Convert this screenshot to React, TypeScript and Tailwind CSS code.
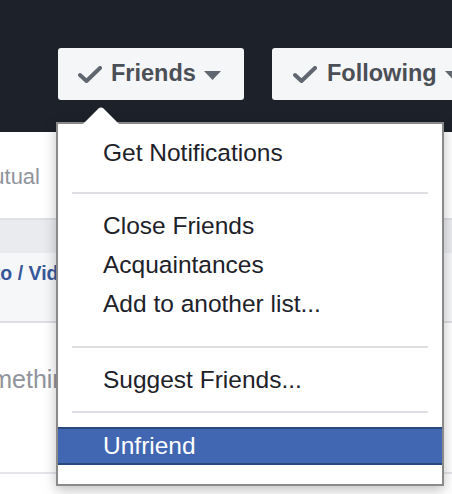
import React from "react";

function Check() {
  return (
    <svg width="24" height="17" viewBox="0 0 24 17" className="shrink-0">
      <path d="M2 9 L8.5 15 L22 2" fill="none" stroke="#606770" strokeWidth="4" strokeLinecap="round" strokeLinejoin="round" />
    </svg>
  );
}

function Tri() {
  return (
    <svg width="17" height="9" viewBox="0 0 17 9" className="shrink-0">
      <path d="M0 0 H17 L8.5 9 Z" fill="#606770" />
    </svg>
  );
}

function Item({ children, highlight }: { children: React.ReactNode; highlight?: boolean }) {
  if (highlight) {
    return (
      <div className="h-[38px] flex items-center pl-[45px] bg-[#4267b2] border-y-2 border-[#29487d] text-white">
        {children}
      </div>
    );
  }
  return <div className="h-[39px] flex items-center pl-[45px] text-[#1d2129]">{children}</div>;
}

export default function App() {
  return (
    <div className="relative w-[452px] h-[494px] overflow-hidden bg-white font-['Liberation_Sans',Arial,sans-serif]">
      <div className="h-[132px] bg-[#1d2129] pt-[48px] pl-[58px] flex items-start gap-[28px]">
        <div className="w-[186px] h-[52px] shrink-0 bg-[#f5f6f7] rounded-[3px] flex items-center pl-[20px]">
          <Check />
          <span className="ml-[9px] text-[23.5px] font-bold text-[#4b4f56]">Friends</span>
          <span className="ml-[8px] mt-[2px] flex"><Tri /></span>
        </div>
        <div className="w-[220px] h-[52px] shrink-0 bg-[#f5f6f7] rounded-[3px] flex items-center pl-[21px]">
          <Check />
          <span className="ml-[10px] text-[23.5px] font-bold text-[#4b4f56]">Following</span>
          <span className="ml-[8px] mt-[2px] flex"><Tri /></span>
        </div>
      </div>
      <div className="h-[86px] flex items-center pt-[3px]">
        <div className="w-[40px] flex justify-end whitespace-nowrap">
          <span className="text-[22px] text-[#90949c]">Mutual</span>
        </div>
      </div>
      <div className="h-[35px] bg-[#e9ebee] border-t-2 border-[#dddfe2]" />
      <div className="h-[70px] bg-[#f6f7f9] border-b-2 border-[#dddfe2] pt-[6px] whitespace-nowrap">
        <span className="block ml-[-43px] text-[19.5px] font-bold text-[#365899]">Photo / Video</span>
      </div>
      <div className="h-[151px] border-b-2 border-[#e5e6e9] pt-[38px] whitespace-nowrap">
        <span className="block ml-[-100px] text-[25px] text-[#90949c]">Write something...</span>
      </div>

      <div className="absolute left-[56px] top-[107px] w-[388px]">
        <svg width="36" height="17" viewBox="0 0 36 17" className="block ml-[27px]">
          <path d="M0 17 L15.5 1.5 Q18 -0.5 20.5 1.5 L36 17 Z" fill="#ffffff" />
        </svg>
        <div className="h-[364px] -mt-[2px] border-2 border-[#8a8a8a] bg-white shadow-[0_4px_12px_rgba(0,0,0,0.25)] text-[24.5px] pt-[10px]">
          <Item>Get Notifications</Item>
          <div className="mx-[14px] mt-[19px] mb-[13px] h-[2px] bg-[#dddfe2]" />
          <Item>Close Friends</Item>
          <Item>Acquaintances</Item>
          <Item>Add to another list...</Item>
          <div className="mx-[14px] mt-[22px] mb-[13px] h-[2px] bg-[#dddfe2]" />
          <Item>Suggest Friends...</Item>
          <div className="mx-[14px] mt-[11px] mb-[14px] h-[2px] bg-[#dddfe2]" />
          <Item highlight>Unfriend</Item>
        </div>
      </div>
    </div>
  );
}
